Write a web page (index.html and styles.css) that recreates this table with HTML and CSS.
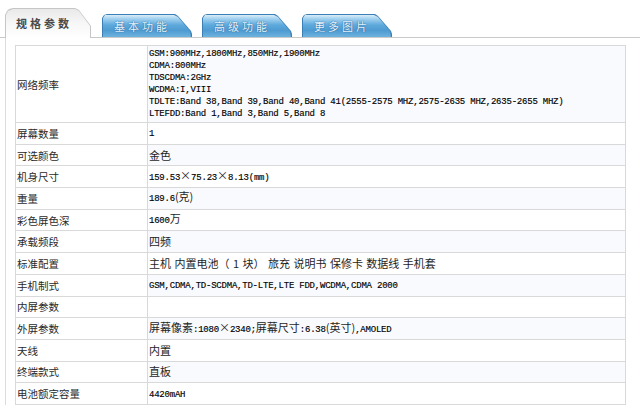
FILE: index.html
```html
<!DOCTYPE html>
<html lang="zh-CN">
<head>
<meta charset="utf-8">
<title>规格参数</title>
<link rel="stylesheet" href="styles.css">
</head>
<body>
<div class="page">
  <div class="tabs">
    <div class="tab tab-active"><div class="tab-inner">规格参数</div></div>
    <div class="tab tab-blue"><div class="tab-inner">基本功能</div></div>
    <div class="tab tab-blue"><div class="tab-inner">高级功能</div></div>
    <div class="tab tab-blue"><div class="tab-inner">更多图片</div></div>
  </div>
  <div class="panel">
    <table class="spec">
      <tr class="odd tall">
        <th>网络频率</th>
        <td><div class="lines mono">
          <div>GSM:900MHz,1800MHz,850MHz,1900MHz</div>
          <div>CDMA:800MHz</div>
          <div>TDSCDMA:2GHz</div>
          <div>WCDMA:I,VIII</div>
          <div>TDLTE:Band 38,Band 39,Band 40,Band 41(2555-2575 MHZ,2575-2635 MHZ,2635-2655 MHZ)</div>
          <div>LTEFDD:Band 1,Band 3,Band 5,Band 8</div>
        </div></td>
      </tr>
      <tr><th>屏幕数量</th><td><span class="mono">1</span></td></tr>
      <tr class="odd"><th>可选颜色</th><td>金色</td></tr>
      <tr><th>机身尺寸</th><td><span class="mono">159.53</span>×<span class="mono">75.23</span>×<span class="mono">8.13(mm)</span></td></tr>
      <tr class="odd"><th>重量</th><td><span class="mono">189.6</span>(克)</td></tr>
      <tr><th>彩色屏色深</th><td><span class="mono">1600</span>万</td></tr>
      <tr class="odd"><th>承载频段</th><td>四频</td></tr>
      <tr><th>标准配置</th><td class="spaced">主机 内置电池（ 1 块） 旅充 说明书 保修卡 数据线 手机套</td></tr>
      <tr class="odd"><th>手机制式</th><td><span class="mono">GSM,CDMA,TD-SCDMA,TD-LTE,LTE FDD,WCDMA,CDMA 2000</span></td></tr>
      <tr><th>内屏参数</th><td></td></tr>
      <tr class="odd"><th>外屏参数</th><td>屏幕像素<span class="mono">:1080</span>×<span class="mono">2340;</span>屏幕尺寸<span class="mono">:6.38</span>(英寸)<span class="mono">,AMOLED</span></td></tr>
      <tr><th>天线</th><td>内置</td></tr>
      <tr class="odd"><th>终端款式</th><td>直板</td></tr>
      <tr><th>电池额定容量</th><td><span class="mono">4420mAH</span></td></tr>
    </table>
  </div>
</div>
</body>
</html>
```

FILE: styles.css
```css
html, body {
  margin: 0;
  padding: 0;
  background: #ffffff;
}
body {
  font-family: "Noto Sans CJK SC", "Noto Sans", sans-serif;
  color: #333;
  width: 640px;
  height: 406px;
  overflow: hidden;
}
.page {
  padding-top: 9px;
}
.tabs {
  display: flex;
  align-items: flex-end;
  gap: 11px;
  padding-left: 5px;
  height: 28px;
  border-bottom: 1px solid #c9c9c9;
}
.tab {
  position: relative;
  box-sizing: border-box;
}
.tab-active {
  width: 86px;
  height: 30px;
  margin-bottom: -1px;
  background: #c6c6c6;
  clip-path: polygon(0 7px, 2px 3px, 4px 1px, 8px 0, 70px 0, 74px 2px, 86px 18px, 86px 100%, 0 100%);
  padding: 1px 1px 0 1px;
}
.tab-active .tab-inner {
  height: 100%;
  background: linear-gradient(180deg, #e9e9e9 0%, #f6f6f6 45%, #ffffff 100%);
  clip-path: polygon(0 6px, 2px 2px, 7px 0, 69px 0, 73px 2px, 84px 17px, 84px 100%, 0 100%);
  font-size: 11px;
  letter-spacing: 3px;
  color: #4a4a4a;
  font-weight: bold;
  padding: 7px 0 0 10px;
  box-sizing: border-box;
  line-height: 14px;
}
.tab-blue {
  width: 90px;
  height: 23px;
  background: #3c7fb5;
  clip-path: polygon(0 4px, 2px 1px, 5px 0, 73px 0, 76px 2px, 89px 17px, 90px 20px, 90px 100%, 0 100%);
  padding: 1px 1px 0 1px;
}
.tab-blue + .tab-blue {
  margin-left: -1px;
}
.tab-blue .tab-inner {
  height: 100%;
  background: linear-gradient(180deg, #d9eef9 0%, #9fcfee 18%, #5ea9dc 45%, #4e9bd1 70%, #6cb2de 100%);
  clip-path: polygon(0 3px, 2px 0, 71px 0, 75px 2px, 87px 16px, 88px 100%, 0 100%);
  font-size: 11px;
  letter-spacing: 3px;
  color: #e6f4fd;
  text-shadow: 0 0 1px #2c6aa0, 0 0 1px #2c6aa0;
  padding: 4px 0 0 11px;
  box-sizing: border-box;
  line-height: 14px;
}
.panel {
  margin-left: 5px;
  border-left: 1px solid #dcdcdc;
  padding: 7px 14px 0 9px;
}
.spec {
  border-collapse: collapse;
  width: 611px;
  border: 1px solid #d2d2d2;
  table-layout: fixed;
}
.spec th, .spec td {
  border: 1px solid #d9d9d9;
  height: 20.7px;
  padding: 0 1px;
  vertical-align: middle;
  text-align: left;
  font-weight: normal;
  font-size: 10.5px;
  line-height: 13px;
  white-space: nowrap;
  color: #2a2a2a;
}
.spec th {
  width: 129px;
  padding-left: 1px;
  background: #ffffff;
}
.spec td {
  background: #ffffff;
  font-size: 11px;
  color: #1e1e1e;
}
.spec td.spaced {
  word-spacing: 1px;
}
.spec tr.odd td {
  background: #f8fafd;
}
.spec tr.tall th, .spec tr.tall td {
  height: 76px;
}
.lines {
  padding: 1px 0 2px;
}
.lines div {
  line-height: 12px;
}
.mono {
  font-family: "Liberation Mono", "DejaVu Sans Mono", monospace;
  font-size: 9px;
  letter-spacing: -0.22px;
  color: #000;
  -webkit-text-stroke: 0.15px #000;
}
```
